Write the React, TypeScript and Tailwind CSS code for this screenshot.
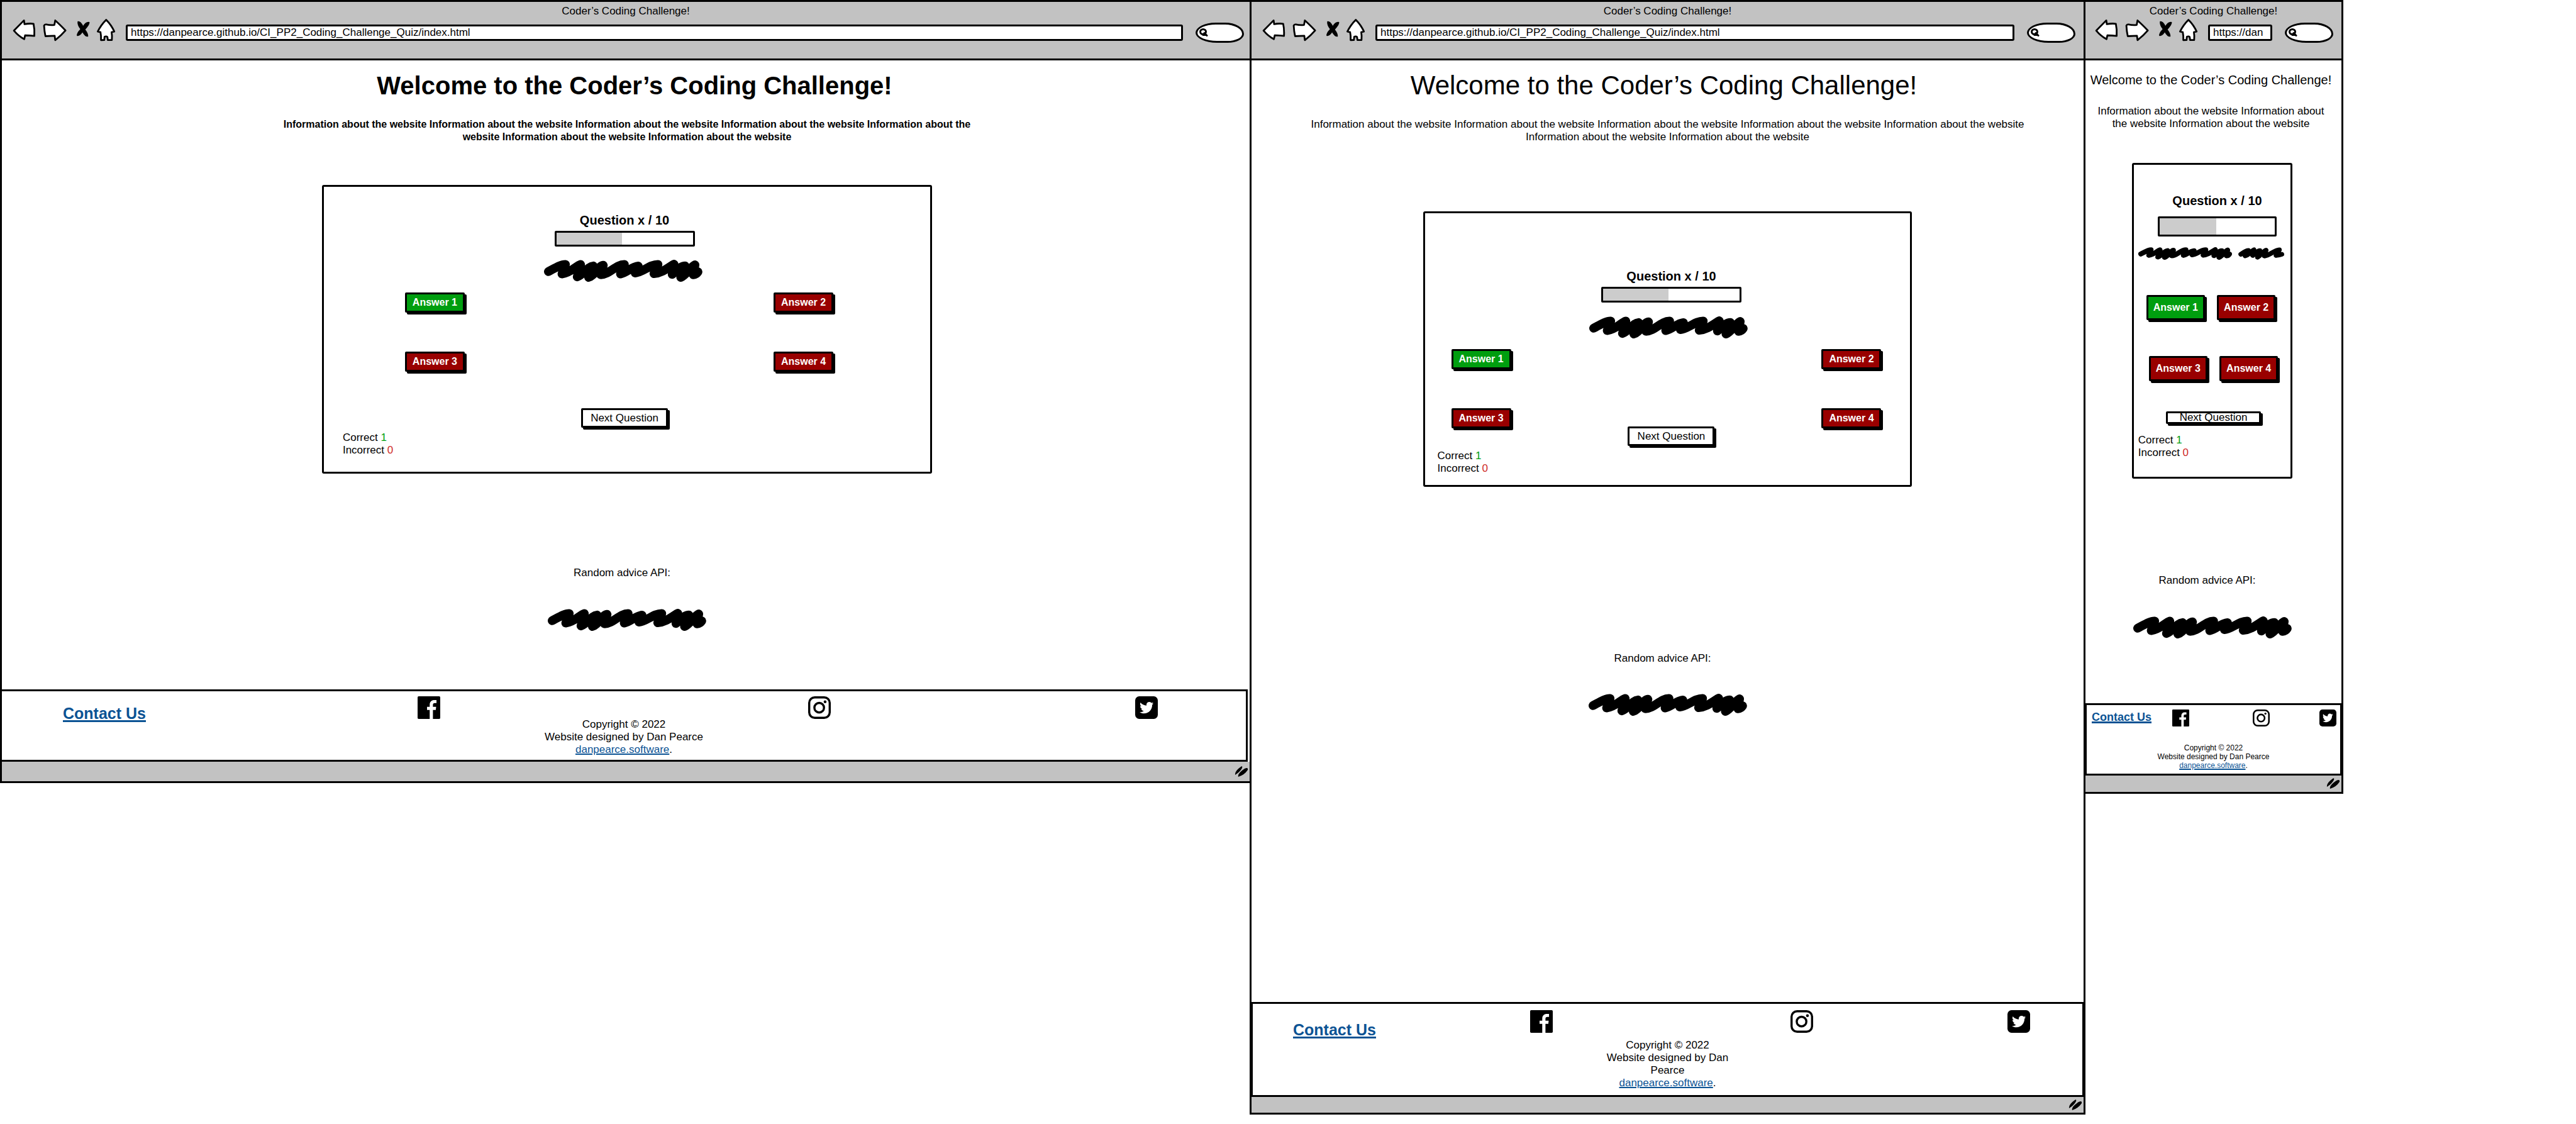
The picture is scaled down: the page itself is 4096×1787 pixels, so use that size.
import React from "react";
import { FaTwitter } from "react-icons/fa";

type Size = "desktop" | "tablet" | "phone";

const SITE_URL = "https://danpearce.github.io/CI_PP2_Coding_Challenge_Quiz/index.html";
const INFO = "Information about the website";

/* Spacing and type choices for each breakpoint of the wireframe. */
const styles = {
  desktop: {
    frame: "border-y-[3px] border-l-[3px]",
    url: SITE_URL,
    nav: "pl-[18px] pr-[9px]",
    main: "pl-1",
    heading: "mt-4 pl-6 text-[40px] leading-[48px] font-bold",
    info: "mt-7 max-w-[1120px] text-[16px] font-bold",
    repeats: 7,
    card: "mt-[66px] w-[49%] pt-[41px] pb-6",
    centre: "pr-2",
    bar: "mt-[5px] h-[25px] w-[223px]",
    fill: 48,
    marks: "mt-[21px] h-[35px] pr-3",
    rows: ["mt-[17px] pl-[129px] pr-[154px]", "mt-[62px] pl-[129px] pr-[154px]"],
    answer: "h-[32px] min-w-[95px]",
    nextRow: "pr-2",
    next: "mt-[58px] h-[31px] w-[138px]",
    score: "mt-[6px] pl-[30px]",
    advice: "mt-[148px]",
    adviceMarks: "mt-[47px]",
    footer: "mt-[93px] mr-[3px] border-y-[3px] border-r-[3px] pb-[6px]",
    links: "pt-2 h-[43px] grid-cols-[minmax(0,334fr)_minmax(0,314fr)_minmax(0,263fr)_minmax(0,89fr)]",
    contact: "pl-[97px] mt-[13px] text-[25px] leading-[28px] underline-offset-2",
    icon: "size-9",
    copy: "max-w-[320px] text-[17px] leading-[20px]",
    status: "h-[31px]",
  },
  tablet: {
    frame: "border-[3px]",
    url: SITE_URL,
    nav: "pl-[18px] pr-[13px]",
    main: "px-0",
    heading: "mt-4 pr-3 text-[42px] leading-[48px]",
    info: "mt-7 max-w-[1180px] text-[17px]",
    repeats: 7,
    card: "mt-[108px] w-[58.8%] pt-[88px] pb-4",
    centre: "pl-3",
    bar: "mt-[5px] h-[25px] w-[223px]",
    fill: 48,
    marks: "mt-[22px] h-[35px] pl-1",
    rows: ["mt-[17px] pl-[42px] pr-[46px]", "mt-[62px] pl-[42px] pr-[46px]"],
    answer: "h-[32px] min-w-[95px]",
    nextRow: "pl-3",
    next: "-mt-[3px] h-[31px] w-[138px]",
    score: "mt-[6px] pl-5",
    advice: "mt-[263px]",
    adviceMarks: "mt-[46px]",
    footer: "mt-[455px] border-y-[3px] border-x-2 pb-[9px]",
    links: "pt-[10px] h-[46px] grid-cols-[minmax(0,334fr)_minmax(0,314fr)_minmax(0,262fr)_minmax(0,90fr)]",
    contact: "pl-[64px] mt-[17px] text-[25px] leading-[28px] underline-offset-2",
    icon: "size-9",
    copy: "mt-[10px] max-w-[220px] text-[17px] leading-[20px]",
    status: "h-[25px]",
  },
  phone: {
    frame: "border-y-[3px] border-r-[3px]",
    url: "https://dan",
    nav: "pl-4 pr-[13px]",
    main: "pr-1",
    heading: "mt-[19px] pr-1 text-[20px] leading-[24px]",
    info: "mt-7 max-w-[380px] pr-1 text-[17px]",
    repeats: 3,
    card: "mt-[52px] w-[63.4%] pt-[45px] pb-7",
    centre: "pl-4",
    bar: "mt-[13px] h-[32px] w-[189px]",
    fill: 49,
    marks: "mt-[17px] h-5 pr-1",
    rows: ["mt-[56px] pl-5 pr-6", "mt-[57px] pl-6 pr-5"],
    answer: "h-[40px] min-w-[90px]",
    nextRow: "pl-1",
    next: "mt-[48px] h-[20px] w-[151px]",
    score: "mt-4 pl-[7px]",
    advice: "mt-[152px]",
    adviceMarks: "mt-[47px]",
    footer: "mt-[103px] border-y-[3px] border-x-2 pb-[6px]",
    links: "pt-[7px] h-[34px] grid-cols-[minmax(0,338fr)_minmax(0,316fr)_minmax(0,265fr)_minmax(0,81fr)]",
    contact: "pl-2 mt-[2px] text-[18px] leading-[20px] underline-offset-1",
    icon: "size-[27px]",
    copy: "mt-[27px] max-w-[240px] text-[12px] leading-[14px]",
    status: "h-[26px]",
  },
};

function NavIcon({ label, viewBox, width, children }: { label: string; viewBox: string; width: string; children: React.ReactNode }) {
  return (
    <button type="button" aria-label={label} className={"shrink-0 " + width}>
      <svg viewBox={viewBox} className="block h-11 w-full overflow-visible" fill="white" stroke="black" strokeWidth="13" strokeLinejoin="round">
        {children}
      </svg>
    </button>
  );
}

function Toolbar({ size }: { size: Size }) {
  const s = styles[size];
  return (
    <header className="h-[93px] border-b-[3px] border-black bg-[#c2c2c2] pt-[5px]">
      <p className="text-center text-[17px] leading-[20px]">Coder’s Coding Challenge!</p>
      <nav className={"flex h-[48px] items-center gap-3 " + s.nav} aria-label="Browser">
        <NavIcon label="Back" viewBox="97 139 166 203" width="w-9">
          <path d="M102 225 L176 150 L180 178 Q215 171 246 175 Q255 215 252 264 Q215 260 184 260 L178 288 Q135 265 102 225Z" />
        </NavIcon>
        <NavIcon label="Forward" viewBox="319 139 176 203" width="w-[38px]">
          <path d="M324 188 Q328 178 340 180 Q370 186 400 183 L406 150 Q440 180 482 224 Q450 262 406 295 L402 263 L334 266 Q326 230 324 188Z" />
        </NavIcon>
        <NavIcon label="Stop" viewBox="550 139 111 203" width="w-6">
          <path
            stroke="none"
            fill="black"
            d="M570 157 Q592 152 611 190 Q632 155 658 162 Q662 180 627 217 Q650 245 648 269 Q626 274 606 238 Q587 268 565 264 Q560 246 590 214 Q566 184 570 157Z"
          />
        </NavIcon>
        <NavIcon label="Home" viewBox="716 139 153 203" width="w-[33px]">
          <path d="M780 145 Q820 185 840 232 L820 236 Q825 265 822 294 L792 294 L789 272 Q780 264 768 271 L766 294 L742 295 Q744 265 738 236 L718 232 Q740 185 780 145Z" />
        </NavIcon>
        <input
          aria-label="Address"
          readOnly
          value={s.url}
          className="h-[26px] w-0 min-w-0 flex-1 rounded-[3px] border-[3px] border-black bg-white pl-[5px] text-[17px] leading-[20px] outline-none"
        />
        <label className="ml-2 flex h-[32px] w-[77px] shrink-0 items-center rounded-[32px_30px_26px_34px/16px_18px_14px_16px] border-[3px] border-black bg-white pl-[3px]">
          <svg viewBox="0 0 14 16" className="h-4 w-[14px] shrink-0" fill="none" stroke="black" strokeLinecap="round">
            <ellipse cx="6" cy="6.500" rx="4.500" ry="4" strokeWidth="3" />
            <path d="M8 8.500 L12 12.500 M6 11.500 H11" strokeWidth="3" />
          </svg>
          <input aria-label="Search" className="w-0 min-w-0 flex-1 bg-transparent outline-none" />
        </label>
      </nav>
    </header>
  );
}

function Scribble({ className }: { className: string }) {
  return (
    <svg viewBox="92 470 1165 160" preserveAspectRatio="none" className={className} fill="none" stroke="black" strokeWidth="64" strokeLinecap="round" strokeLinejoin="round" aria-hidden="true">
      <path d="M124 556 C165 535 215 502 250 504 L224 573 C290 565 325 515 361 504 L336 594 C380 580 410 520 455 515 L420 598 C460 590 490 515 528 510 L508 578 C570 580 620 503 683 504 L654 573 C700 565 735 520 785 516 L762 566 C820 560 870 503 930 504 L900 571 C970 565 1010 520 1048 502 L1034 576 C1060 560 1090 515 1130 515 L1097 598 C1140 580 1170 520 1202 507 L1190 579 Q1212 577 1224 558" />
      <path strokeWidth="56" d="M370 555 H530 M1040 560 H1200" />
    </svg>
  );
}

function ShortScribble({ className }: { className: string }) {
  return (
    <svg viewBox="0 0 570 160" preserveAspectRatio="none" className={className} fill="none" stroke="black" strokeWidth="60" strokeLinecap="round" strokeLinejoin="round" aria-hidden="true">
      <path d="M32 90 C65 65 95 45 125 42 L85 110 C135 95 160 50 195 34 L180 105 C200 90 230 48 268 44 L240 128 C275 110 310 50 345 38 L325 112 C400 100 440 40 510 34 L470 105 Q510 100 540 90" />
    </svg>
  );
}

function Answer({ n, size }: { n: number; size: Size }) {
  return (
    <button
      type="button"
      className={
        "rounded-[2px] border-[3px] border-black px-[8px] text-[16px] leading-[20px] font-bold text-white shadow-[3px_3px_0_black] " +
        (n === 1 ? "bg-[#009e0f] " : "bg-[#990000] ") +
        styles[size].answer
      }
    >
      Answer {n}
    </button>
  );
}

function QuizCard({ size }: { size: Size }) {
  const s = styles[size];
  return (
    <section className={"rounded-[3px] border-[3px] border-black " + s.card}>
      <div className={"flex flex-col items-center " + s.centre}>
        <h2 className="text-[20px] leading-[24px] font-bold">Question x / 10</h2>
        <div role="progressbar" aria-label="Quiz progress" aria-valuenow={s.fill} className={"rounded-[2px] border-[3px] border-black " + s.bar}>
          <div className="h-full bg-[#cccccc]" style={{ width: `${s.fill}%` }} />
        </div>
      </div>
      <div className={"flex justify-center gap-[10px] " + s.marks}>
        {size === "phone" ? (
          <>
            <Scribble className="h-full w-[149px]" />
            <ShortScribble className="h-full w-[73px]" />
          </>
        ) : (
          <Scribble className="h-full w-[252px]" />
        )}
      </div>
      <div className={"flex justify-between " + s.rows[0]}>
        <Answer n={1} size={size} />
        <Answer n={2} size={size} />
      </div>
      <div className={"flex justify-between " + s.rows[1]}>
        <Answer n={3} size={size} />
        <Answer n={4} size={size} />
      </div>
      <div className={"flex justify-center " + s.nextRow}>
        <button
          type="button"
          className={"flex items-center justify-center rounded-[2px] border-[3px] border-black bg-white text-[17px] leading-[20px] shadow-[3px_3px_0_black] " + s.next}
        >
          Next Question
        </button>
      </div>
      <div className={"text-[17px] leading-[20px] " + s.score}>
        <p>
          Correct <span className="text-[#009e0f]">1</span>
        </p>
        <p>
          Incorrect <span className="text-[#cf2a27]">0</span>
        </p>
      </div>
    </section>
  );
}

function Footer({ size }: { size: Size }) {
  const s = styles[size];
  return (
    <footer className={"border-black " + s.footer}>
      <nav className={"grid items-start " + s.links} aria-label="Social">
        <div className={"font-bold whitespace-nowrap text-[#0b5394] " + s.contact}>
          <a href="#contact" className="underline decoration-[3px]">
            Contact Us
          </a>
        </div>
        <a href="#facebook" aria-label="Facebook" className={s.icon}>
          <svg viewBox="0 0 127 127" className="size-full">
            <rect width="127" height="127" rx="6" />
            <path fill="white" d="M68 127V77H53V59H68V48C68 30 78 21 95 21H106V38H97C89 38 86 42 86 49V59H104L102 77H86V127Z" />
          </svg>
        </a>
        <a href="#instagram" aria-label="Instagram" className={s.icon}>
          <svg viewBox="0 0 127 127" className="size-full" fill="none" stroke="black">
            <rect x="6" y="6" width="115" height="115" rx="31" strokeWidth="12" />
            <circle cx="62" cy="64" r="27" strokeWidth="12" />
            <circle cx="95" cy="31" r="8" fill="black" stroke="none" />
          </svg>
        </a>
        <a href="#twitter" aria-label="Twitter" className={"flex items-center justify-center rounded-[18%] bg-black " + s.icon}>
          <FaTwitter className="size-[62%] text-white" />
        </a>
      </nav>
      <div className={"mx-auto text-center " + s.copy}>
        <p>Copyright © 2022</p>
        <p>Website designed by Dan Pearce</p>
        <p>
          <a href="#danpearce" className="text-[#0b5394] underline decoration-2 underline-offset-1">
            danpearce.software
          </a>
          .
        </p>
      </div>
    </footer>
  );
}

function BrowserWindow({ size }: { size: Size }) {
  const s = styles[size];
  return (
    <article className={"min-w-0 border-black bg-white " + s.frame}>
      <Toolbar size={size} />
      <main className={"flex flex-col items-center " + s.main}>
        <h1 className={"whitespace-nowrap " + s.heading}>Welcome to the Coder’s Coding Challenge!</h1>
        <p className={"text-center leading-[20px] " + s.info}>{Array(s.repeats).fill(INFO).join(" ")}</p>
        <QuizCard size={size} />
        <p className={"pr-4 text-[17px] leading-[20px] " + s.advice}>Random advice API:</p>
        <Scribble className={"h-[35px] w-[252px] " + s.adviceMarks} />
      </main>
      <Footer size={size} />
      <div className={"flex items-center justify-end bg-[#c2c2c2] pr-[2px] " + s.status}>
        <svg viewBox="0 0 22 18" className="h-[18px] w-[22px]" aria-hidden="true">
          <path d="M1 14 Q0 8 10 1 Q13 -1 12 3 Q9 9 1 14Z M6 17 Q4 12 16 4 Q22 1 21 6 Q16 14 6 17Z" />
        </svg>
      </div>
    </article>
  );
}

export default function App() {
  return (
    <div className="grid min-h-screen grid-cols-[minmax(0,1987fr)_minmax(0,1329fr)_minmax(0,410fr)_minmax(0,370fr)] items-start bg-white font-['Liberation_Sans',Arial,sans-serif] text-black">
      <BrowserWindow size="desktop" />
      <BrowserWindow size="tablet" />
      <BrowserWindow size="phone" />
    </div>
  );
}
